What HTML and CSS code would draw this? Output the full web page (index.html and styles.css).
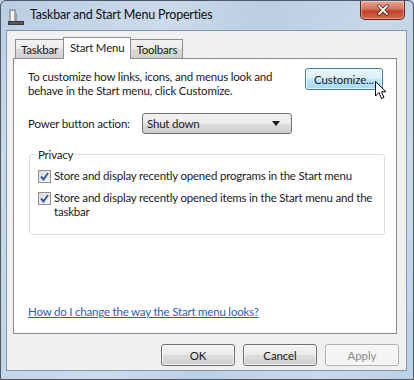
FILE: index.html
```html
<!DOCTYPE html>
<html>
<head>
<meta charset="utf-8">
<link rel="stylesheet" href="styles.css">
</head>
<body>
<div class="window">
  <div class="titlebar">
    <svg class="app-icon" width="16" height="16" viewBox="0 0 16 16">
      <rect x="2" y="1" width="5" height="12" fill="#f4f4f4" stroke="#6a6a6a"/>
      <rect x="7" y="4" width="2" height="9" fill="#9a9a9a"/>
      <rect x="0.5" y="12.5" width="15" height="3" fill="#5a5a5a" stroke="#3a3a3a"/>
    </svg>
    <span class="title">Taskbar and Start Menu Properties</span>
    <div class="close">
      <svg width="14" height="12" viewBox="0 0 14 12">
        <path d="M3 2 L11 10 M11 2 L3 10" stroke="#3a1a14" stroke-width="3.2" stroke-linecap="round"/>
        <path d="M3 2 L11 10 M11 2 L3 10" stroke="#ffffff" stroke-width="1.8" stroke-linecap="round"/>
      </svg>
    </div>
  </div>
  <div class="client">
    <div class="tabs">
      <div class="tab">Taskbar</div>
      <div class="tab active">Start Menu</div>
      <div class="tab">Toolbars</div>
    </div>
    <div class="panel">
      <div class="row-top">
        <p class="intro">To customize how links, icons, and menus look and<br>behave in the Start menu, click Customize.</p>
        <div class="customize-wrap">
          <button class="btn hot">Customize...</button>
          <svg class="cursor" width="12" height="19" viewBox="0 0 12 19">
            <path d="M0.5 0.5 L0.5 15 L4 11.5 L6.5 17.5 L9 16.5 L6.5 10.8 L11 10.8 Z" fill="#ffffff" stroke="#000" stroke-width="1" stroke-linejoin="miter"/>
          </svg>
        </div>
      </div>
      <div class="power-row">
        <span class="label">Power button action:</span>
        <div class="select">
          <span>Shut down</span>
          <svg width="8" height="5" viewBox="0 0 8 5"><path d="M0 0 H8 L4 5 Z" fill="#1a1a1a"/></svg>
        </div>
      </div>
      <fieldset class="group">
        <legend>Privacy</legend>
        <label class="check">
          <span class="box"><svg width="9" height="9" viewBox="0 0 9 9"><path d="M1 4.5 L3.5 7.5 L8 1" stroke="#3c5aa8" stroke-width="2" fill="none"/></svg></span>
          <span class="ctext">Store and display recently opened programs in the Start menu</span>
        </label>
        <label class="check">
          <span class="box"><svg width="9" height="9" viewBox="0 0 9 9"><path d="M1 4.5 L3.5 7.5 L8 1" stroke="#3c5aa8" stroke-width="2" fill="none"/></svg></span>
          <span class="ctext">Store and display recently opened items in the Start menu and the<br>taskbar</span>
        </label>
      </fieldset>
      <a class="help" href="#">How do I change the way the Start menu looks?</a>
    </div>
    <div class="buttons">
      <button class="btn">OK</button>
      <button class="btn">Cancel</button>
      <button class="btn disabled">Apply</button>
    </div>
  </div>
</div>
</body>
</html>
```

FILE: styles.css
```css
* { box-sizing: border-box; }
html, body { margin: 0; padding: 0; }
body {
  width: 414px;
  height: 380px;
  overflow: hidden;
  background: #bcd0e6;
  font-family: "Lato", "Noto Sans", sans-serif;
  font-size: 11.5px;
  letter-spacing: -0.2px;
  color: #1a1a1a;
}
.window {
  width: 414px;
  height: 380px;
  display: flex;
  flex-direction: column;
  border: 1px solid #4a5868;
  border-radius: 6px 6px 0 0;
  background:
    linear-gradient(100deg, rgba(255,255,255,0) 0%, rgba(255,255,255,0.25) 35%, rgba(255,255,255,0) 55%, rgba(255,255,255,0.2) 80%, rgba(255,255,255,0) 100%),
    linear-gradient(180deg, #b9cde3 0%, #c6d8ec 40%, #bcd0e6 100%);
  padding: 0 6px 8px 5px;
}
.titlebar {
  height: 29px;
  display: flex;
  align-items: flex-start;
  position: relative;
}
.app-icon {
  margin-top: 8px;
  margin-left: 2px;
  flex: none;
}
.title {
  margin-top: 6px;
  margin-left: 6px;
  font-size: 12.5px;
  color: #101010;
}
.close {
  margin-left: auto;
  margin-right: 2px;
  width: 45px;
  height: 19px;
  border: 1px solid #5a2a22;
  border-top: none;
  border-radius: 0 0 5px 5px;
  background: linear-gradient(180deg, #e9a996 0%, #d6725c 45%, #c3422a 55%, #d06a4c 100%);
  display: flex;
  align-items: center;
  justify-content: center;
  box-shadow: inset 0 0 0 1px rgba(255,255,255,0.35);
}
.client {
  flex: 1;
  background: #f0f0f0;
  border: 1px solid #7f97b1;
  padding: 6px 8px 0 6px;
  display: flex;
  flex-direction: column;
}
.tabs {
  display: flex;
  align-items: flex-end;
  padding-left: 2px;
  height: 21px;
  position: relative;
  z-index: 1;
}
.tab {
  height: 19px;
  padding: 0 5px;
  border: 1px solid #8c8e94;
  border-bottom: none;
  background: linear-gradient(180deg, #f2f2f2 0%, #ebebeb 50%, #dcdcdc 51%, #cfcfcf 100%);
  font-size: 11.5px;
  line-height: 19px;
  margin-right: -1px;
}
.tab.active {
  height: 22px;
  background: #ffffff;
  padding: 0 6px;
  line-height: 19px;
  margin-bottom: -1px;
  position: relative;
  z-index: 2;
  margin-right: -1px;
}
.panel {
  height: 276px;
  background: #ffffff;
  border: 1px solid #898c95;
  padding: 10px 13px 0 14px;
  display: flex;
  flex-direction: column;
  margin-right: 1px;
}
.row-top {
  display: flex;
  justify-content: space-between;
  align-items: flex-start;
}
.intro {
  margin: 1px 0 0;
  line-height: 14px;
}
.customize-wrap {
  position: relative;
  margin-top: -1px;
}
.btn {
  font-family: inherit;
  font-size: 11.5px;
  letter-spacing: -0.1px;
  color: #1a1a1a;
  height: 22px;
  border: 1px solid #707070;
  border-radius: 3px;
  background: linear-gradient(180deg, #f2f2f2 0%, #ebebeb 50%, #dddddd 51%, #cfcfcf 100%);
  box-shadow: inset 0 0 0 1px rgba(255,255,255,0.7);
  padding: 0;
}
.btn.hot {
  width: 78px;
  border-color: #3c7fb1;
  background: linear-gradient(180deg, #eaf6fd 0%, #d9f0fc 50%, #bee6fd 51%, #a7d9f5 100%);
}
.cursor {
  position: absolute;
  left: 70px;
  top: 13px;
}
.power-row {
  display: flex;
  align-items: center;
  margin-top: 15px;
}
.label {
  width: 114px;
}
.select {
  width: 150px;
  height: 21px;
  border: 1px solid #707070;
  border-radius: 3px;
  background: linear-gradient(180deg, #f2f2f2 0%, #ebebeb 50%, #dddddd 51%, #cfcfcf 100%);
  display: flex;
  align-items: center;
  justify-content: space-between;
  padding: 0 11px 0 4px;
}
.group {
  margin: 14px 0 0 1px;
  width: 356px;
  height: 87px;
  border: 1px solid #d5dfe5;
  border-radius: 3px;
  padding: 3px 6px 0 8px;
}
.group legend {
  padding: 0 2px;
  margin-left: -2px;
  color: #1a1a1a;
}
.check {
  display: flex;
  align-items: flex-start;
  gap: 3px;
  line-height: 14px;
  margin-top: 5px;
}
.check + .check { margin-top: 8px; }
.ctext { white-space: nowrap; }
.box {
  flex: none;
  width: 13px;
  height: 13px;
  border: 1px solid #8f8f8f;
  background: linear-gradient(135deg, #dcdcdc 0%, #f8f8f8 100%);
  display: flex;
  align-items: center;
  justify-content: center;
  margin-top: 1px;
}
.help {
  margin-top: auto;
  margin-bottom: 15px;
  color: #1e64b4;
  text-decoration: underline;
}
.buttons {
  display: flex;
  justify-content: flex-end;
  gap: 8px;
  margin-top: 10px;
  margin-right: -1px;
}
.buttons .btn {
  width: 74px;
}
.btn.disabled {
  color: #8d8d8d;
  border-color: #adb2b5;
  background: #f4f4f4;
}
```
